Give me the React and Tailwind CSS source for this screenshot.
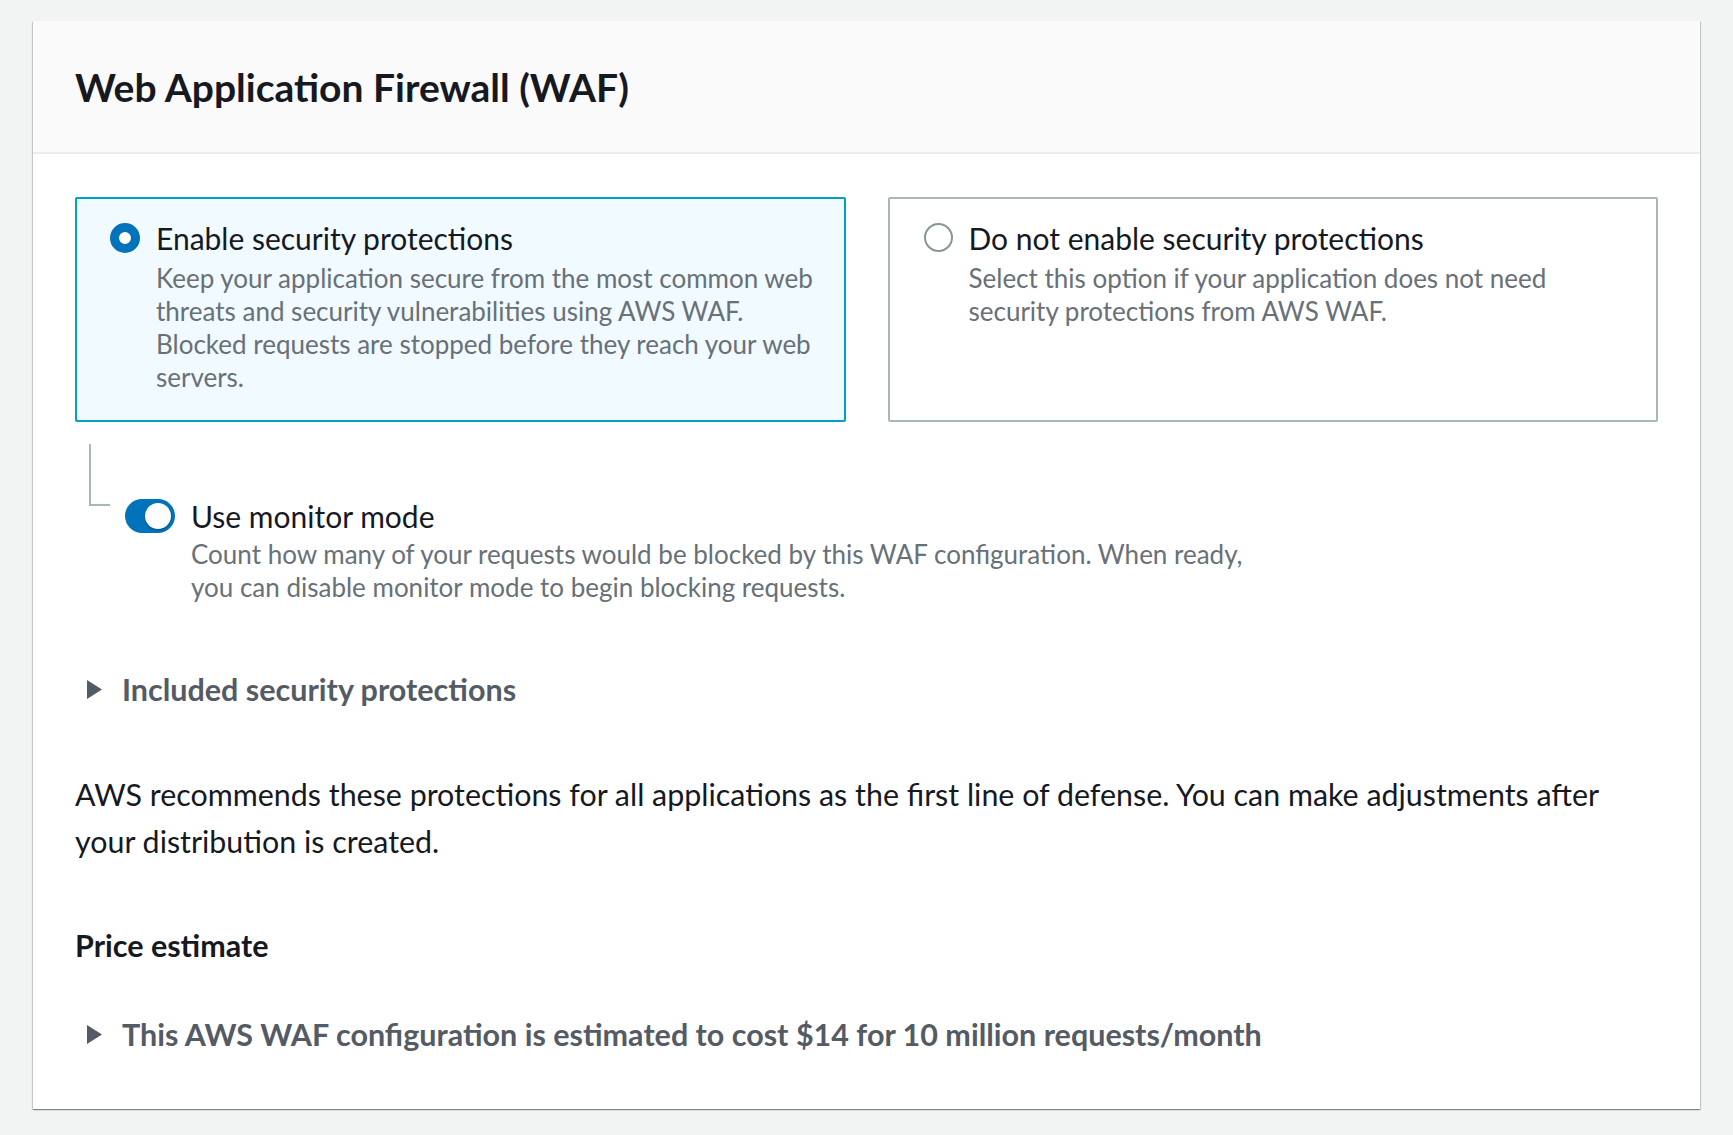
import React from "react";

const Caret = () => (
  <svg width="17" height="21" viewBox="0 0 17 21" className="shrink-0">
    <polygon points="1,1 16,10.5 1,20" fill="#545b64" />
  </svg>
);

const Expand = ({ children }) => (
  <div className="flex items-center pl-[11px] gap-[19px]">
    <Caret />
    <span className="text-[30.5px] leading-[36px] font-bold text-[#545b64]">{children}</span>
  </div>
);

export default function App() {
  return (
    <div
      className="min-h-[1135px] bg-[#f2f3f3] px-[33px] pt-[21px] pb-[26px]"
      style={{ fontFamily: "Lato, 'Open Sans', sans-serif" }}
    >
      <div className="bg-white shadow-[0_1px_1px_0_rgba(0,28,36,0.3),1px_1px_1px_0_rgba(0,28,36,0.15),-1px_1px_1px_0_rgba(0,28,36,0.15)]">
        <div className="h-[133px] bg-[#fafafa] border-b-2 border-[#eaeded] flex items-center px-[42px]">
          <h2 className="text-[39px] leading-[44px] font-bold text-[#16191f]">
            Web Application Firewall (WAF)
          </h2>
        </div>
        <div className="px-[42px] pt-[43px] pb-[57px] text-[#16191f]">
          <div className="grid grid-cols-2 gap-[42px]">
            <div className="border-2 border-[#00a1c9] bg-[#f1faff] rounded-[2px] pl-[33px] pr-[18px] pt-[21px] pb-[26px] flex gap-[16px]">
              <span className="mt-[3px] w-[30px] h-[30px] rounded-full border-[9px] border-[#0073bb] bg-white shrink-0" />
              <div>
                <div className="text-[30px] leading-[36px] mb-[6px]">Enable security protections</div>
                <div className="text-[26px] leading-[33px] text-[#687078]">
                  Keep your application secure from the most common web threats and security vulnerabilities using AWS WAF. Blocked requests are stopped before they reach your web servers.
                </div>
              </div>
            </div>
            <div className="border-2 border-[#aab7b8] rounded-[2px] pl-[34px] pr-[18px] pt-[21px] pb-[26px] flex gap-[16px]">
              <span className="mt-[3px] w-[29px] h-[29px] rounded-full border-2 border-[#879596] bg-white shrink-0" />
              <div>
                <div className="text-[30px] leading-[36px] mb-[6px]">Do not enable security protections</div>
                <div className="text-[26px] leading-[33px] text-[#687078]">
                  Select this option if your application does not need security protections from AWS WAF.
                </div>
              </div>
            </div>
          </div>

          <div className="flex items-start mt-[22px]">
            <div className="ml-[14px] w-[21px] h-[62px] border-l-2 border-b-2 border-[#aab7b8] shrink-0" />
            <div className="ml-[15px] mt-[54px] flex gap-[16px]">
              <span className="relative mt-[1px] w-[50px] h-[34px] rounded-full bg-[#0073bb] shrink-0">
                <span className="absolute right-[4px] top-[4px] w-[26px] h-[26px] rounded-full bg-white shadow-[0_1px_2px_rgba(0,0,0,0.35)]" />
              </span>
              <div>
                <div className="text-[30px] leading-[36px] mb-[4px]">Use monitor mode</div>
                <div className="text-[26px] leading-[33px] text-[#687078] max-w-[1090px]">
                  Count how many of your requests would be blocked by this WAF configuration. When ready, you can disable monitor mode to begin blocking requests.
                </div>
              </div>
            </div>
          </div>

          <div className="mt-[67px]">
            <Expand>Included security protections</Expand>
          </div>

          <p className="mt-[64px] text-[30.4px] leading-[47px] max-w-[1570px]">
            AWS recommends these protections for all applications as the first line of defense. You can make adjustments after your distribution is created.
          </p>

          <div className="mt-[62px] text-[30.5px] leading-[36px] font-bold">Price estimate</div>

          <div className="mt-[53px]">
            <Expand>This AWS WAF configuration is estimated to cost $14 for 10 million requests/month</Expand>
          </div>
        </div>
      </div>
    </div>
  );
}
